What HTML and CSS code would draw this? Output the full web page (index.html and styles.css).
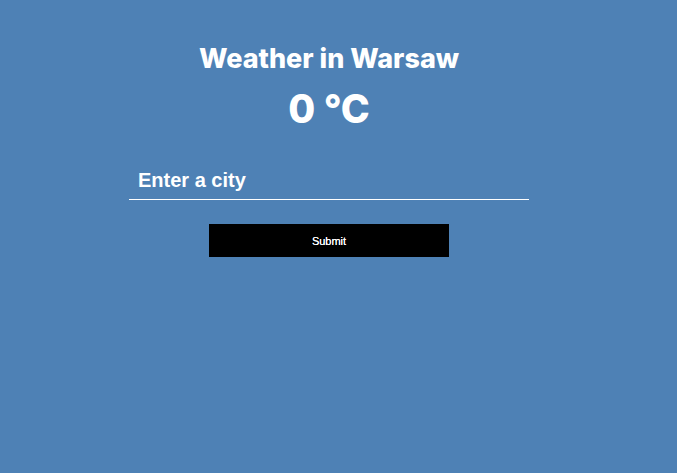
FILE: index.html
```html
<!DOCTYPE html>
<html>
<head>
<meta charset="utf-8">
<link rel="stylesheet" href="styles.css">
</head>
<body>
<main class="app">
  <h1 class="title">Weather in Warsaw</h1>
  <div class="temp">0 °C</div>
  <form class="form">
    <input class="city" type="text" placeholder="Enter a city">
    <button class="submit" type="button">Submit</button>
  </form>
</main>
</body>
</html>
```
FILE: styles.css
```css
html, body {
  margin: 0;
  height: 100%;
}
body {
  background: #4e81b5;
  font-family: "Liberation Sans", Arial, sans-serif;
  color: #fff;
}
.app {
  width: 658px;
  display: flex;
  flex-direction: column;
  align-items: center;
  padding-top: 42px;
}
.title {
  margin: 0;
  font-family: Inter, "Open Sans", sans-serif;
  font-weight: 800;
  font-size: 27px;
  line-height: 34px;
}
.temp {
  margin-top: 10px;
  font-family: Inter, "Open Sans", sans-serif;
  font-weight: 800;
  font-size: 39px;
  line-height: 46px;
}
.form {
  margin-top: 32px;
  display: flex;
  flex-direction: column;
  align-items: center;
}
.city {
  width: 400px;
  box-sizing: border-box;
  background: transparent;
  border: none;
  border-bottom: 1px solid #fff;
  outline: none;
  padding: 0 0 2px 9px;
  height: 36px;
  font-family: "Liberation Sans", Arial, sans-serif;
  font-weight: 700;
  font-size: 20px;
  color: #fff;
}
.city::placeholder {
  color: #fff;
  opacity: 1;
}
.submit {
  margin-top: 24px;
  width: 240px;
  height: 33px;
  background: #000;
  border: none;
  color: #fff;
  font-family: "Liberation Sans", Arial, sans-serif;
  font-size: 11px;
  font-weight: 400;
  text-shadow: 0 0 0.4px #fff;
  padding: 0;
}
```
